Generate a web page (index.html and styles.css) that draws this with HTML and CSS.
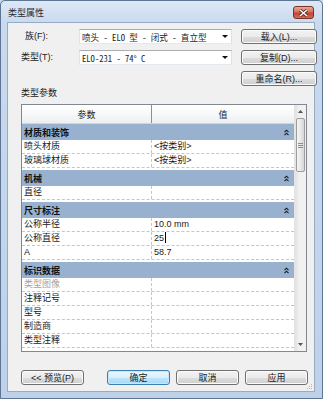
FILE: index.html
```html
<!DOCTYPE html>
<html lang="zh-CN">
<head>
    <meta charset="UTF-8">
    <meta name="viewport" content="width=device-width, initial-scale=1.0">
    <title>类型属性</title>
    <link rel="stylesheet" href="styles.css">
</head>
<body>
    <div class="dialog">
        <div class="title-bar">
            <span class="title">类型属性</span>
            <button class="close-btn" title="关闭">
                <svg width="9" height="8" viewBox="0 0 9 8"><path d="M1 1L8 7M8 1L1 7" stroke="#5a1f18" stroke-width="3"/><path d="M1 1L8 7M8 1L1 7" stroke="#fff" stroke-width="1.6"/></svg>
            </button>
        </div>

        <div class="dialog-body">
            <div class="type-form">
                <label class="field-label label-indent">族(F):</label>
                <div class="combo"><span>喷头 - ELO 型 - 闭式 - 直立型</span><i class="combo-arrow"></i></div>
                <button class="btn">载入(L)...</button>

                <label class="field-label">类型(T):</label>
                <div class="combo"><span>ELO-231 - 74° C</span><i class="combo-arrow"></i></div>
                <button class="btn">复制(D)...</button>

                <button class="btn btn-rename">重命名(R)...</button>
            </div>

            <div class="section-label">类型参数</div>

            <div class="param-table">
                <div class="grid">
                    <div class="grid-head">
                        <div class="head-cell">参数</div>
                        <div class="head-cell">值</div>
                    </div>
                    <div class="grid-body">
                        <div class="group-row"><span>材质和装饰</span><svg class="collapse" width="5" height="7" viewBox="0 0 5 7"><path d="M0.5 3.2L2.5 1.2L4.5 3.2M0.5 6.2L2.5 4.2L4.5 6.2" fill="none" stroke="#1a1a1a" stroke-width="1.1"/></svg></div>
                        <div class="row"><div class="cell">喷头材质</div><div class="cell">&lt;按类别&gt;</div></div>
                        <div class="row"><div class="cell">玻璃球材质</div><div class="cell">&lt;按类别&gt;</div></div>

                        <div class="group-row"><span>机械</span><svg class="collapse" width="5" height="7" viewBox="0 0 5 7"><path d="M0.5 3.2L2.5 1.2L4.5 3.2M0.5 6.2L2.5 4.2L4.5 6.2" fill="none" stroke="#1a1a1a" stroke-width="1.1"/></svg></div>
                        <div class="row"><div class="cell">直径</div><div class="cell"></div></div>

                        <div class="group-row"><span>尺寸标注</span><svg class="collapse" width="5" height="7" viewBox="0 0 5 7"><path d="M0.5 3.2L2.5 1.2L4.5 3.2M0.5 6.2L2.5 4.2L4.5 6.2" fill="none" stroke="#1a1a1a" stroke-width="1.1"/></svg></div>
                        <div class="row"><div class="cell">公称半径</div><div class="cell">10.0 mm</div></div>
                        <div class="row"><div class="cell">公称直径</div><div class="cell editing">25<span class="caret"></span></div></div>
                        <div class="row"><div class="cell">A</div><div class="cell">58.7</div></div>

                        <div class="group-row"><span>标识数据</span><svg class="collapse" width="5" height="7" viewBox="0 0 5 7"><path d="M0.5 3.2L2.5 1.2L4.5 3.2M0.5 6.2L2.5 4.2L4.5 6.2" fill="none" stroke="#1a1a1a" stroke-width="1.1"/></svg></div>
                        <div class="row"><div class="cell disabled">类型图像</div><div class="cell"></div></div>
                        <div class="row"><div class="cell">注释记号</div><div class="cell"></div></div>
                        <div class="row"><div class="cell">型号</div><div class="cell"></div></div>
                        <div class="row"><div class="cell">制造商</div><div class="cell"></div></div>
                        <div class="row"><div class="cell">类型注释</div><div class="cell"></div></div>
                    </div>
                </div>
                <div class="scrollbar">
                    <div class="scroll-arrow"><svg width="5" height="3" viewBox="0 0 5 3"><path d="M0 3L2.5 0L5 3Z" fill="#555"/></svg></div>
                    <div class="scroll-thumb"><svg width="5" height="5" viewBox="0 0 5 5"><path d="M0 0.5H5M0 2.5H5M0 4.5H5" stroke="#8c8c8c" stroke-width="1"/></svg></div>
                    <div class="scroll-track"></div>
                    <div class="scroll-arrow"><svg width="5" height="3" viewBox="0 0 5 3"><path d="M0 0L2.5 3L5 0Z" fill="#555"/></svg></div>
                </div>
            </div>

            <div class="footer">
                <button class="btn btn-wide">&lt;&lt; 预览(P)</button>
                <div class="footer-actions">
                    <button class="btn btn-wide btn-default">确定</button>
                    <button class="btn btn-wide">取消</button>
                    <button class="btn btn-wide">应用</button>
                </div>
            </div>

            <svg class="grip" width="6" height="6" viewBox="0 0 6 6">
                <rect x="4" y="0" width="1" height="1" fill="#b5b5b5"/>
                <rect x="2" y="2" width="1" height="1" fill="#b5b5b5"/>
                <rect x="4" y="2" width="1" height="1" fill="#b5b5b5"/>
                <rect x="0" y="4" width="1" height="1" fill="#b5b5b5"/>
                <rect x="2" y="4" width="1" height="1" fill="#b5b5b5"/>
                <rect x="4" y="4" width="1" height="1" fill="#b5b5b5"/>
            </svg>
        </div>
    </div>
</body>
</html>
```

FILE: styles.css
```css
* {
    box-sizing: border-box;
}
body {
    margin: 0;
    background-color: #c4d5ea;
    font-family: "Liberation Sans", "Noto Sans CJK SC", sans-serif;
    font-size: 9px;
    color: #1b1b1b;
}
.dialog {
    width: 323px;
    height: 399px;
    display: flex;
    flex-direction: column;
    border: 1px solid #5d7593;
    border-radius: 5px 5px 0 0;
    padding: 0 7px 6px 6px;
    background: linear-gradient(#dde8f5, #c9daee 22px, #bed1e9);
}
.title-bar {
    height: 21px;
    display: flex;
    justify-content: space-between;
    align-items: flex-start;
}
.title {
    padding: 6px 0 0 1px;
    line-height: 13px;
    color: #1e2b3a;
}
.close-btn {
    width: 21px;
    height: 13px;
    margin: 5px 1px 0 0;
    padding: 0;
    border: 1px solid #7b3128;
    border-radius: 3px;
    background: linear-gradient(#e9a99c, #d4705f 45%, #c1432f 55%, #d26b55);
    display: flex;
    align-items: center;
    justify-content: center;
}

.dialog-body {
    position: relative;
    flex-grow: 1;
    background-color: #f0f0f0;
    border: 1px solid #97abc4;
    padding: 6px 6px 6px 13px;
    display: flex;
    flex-direction: column;
}

/* family / type pickers */
.type-form {
    display: grid;
    grid-template-columns: 49px 153px 76px;
    grid-auto-rows: 15px;
    column-gap: 9px;
    row-gap: 6px;
    align-items: center;
}
.field-label {
    line-height: 15px;
    white-space: nowrap;
}
.label-indent {
    padding-left: 4px;
}
.combo {
    height: 15px;
    display: flex;
    align-items: center;
    justify-content: space-between;
    padding: 0 3px 0 2px;
    background-color: #fff;
    border: 1px solid #abadb3;
    border-color: #abadb3 #dbdfe6 #e3e9ef #e2e3ea;
    font-family: "Noto Sans Mono CJK SC", "Liberation Mono", "Noto Sans CJK SC", monospace;
    font-size: 8.6px;
    white-space: pre;
    overflow: hidden;
}
.combo-arrow {
    width: 0;
    height: 0;
    border-left: 3px solid transparent;
    border-right: 3px solid transparent;
    border-top: 3px solid #111;
}
.btn {
    height: 15px;
    padding: 0;
    font-family: inherit;
    font-size: 9px;
    color: #1b1b1b;
    border: 1px solid #707070;
    border-radius: 3px;
    background: linear-gradient(#f2f2f2, #ebebeb 50%, #dddddd 51%, #cfcfcf);
    box-shadow: inset 0 0 0 1px #fbfbfb;
}
.btn-rename {
    grid-column: 3;
}

.section-label {
    margin-top: 1px;
    line-height: 13px;
}

/* parameter table */
.param-table {
    width: 286px;
    height: 248px;
    margin-top: 4px;
    display: flex;
    border: 1px solid #828790;
    background-color: #fff;
}
.grid {
    width: 272px;
    overflow: hidden;
}
.grid-head {
    display: grid;
    grid-template-columns: 130px 142px;
    height: 19px;
    border-bottom: 1px solid #d5d5d5;
    background: linear-gradient(#ffffff, #f6f7f8 60%, #eceef0);
}
.head-cell {
    display: flex;
    align-items: center;
    justify-content: center;
}
.head-cell:first-child {
    border-right: 1px solid #8e8f8f;
}
.group-row {
    height: 16px;
    margin-top: 2px;
    display: flex;
    align-items: center;
    justify-content: space-between;
    padding: 0 5px 0 2px;
    background-color: #97b1cf;
    font-weight: bold;
    color: #111;
}
.group-row:first-child {
    margin-top: 0;
}
.row {
    display: grid;
    grid-template-columns: 130px 142px;
    height: 14px;
    border-bottom: 1px dashed #c6c6c6;
}
.cell {
    padding-left: 2px;
    line-height: 13px;
    white-space: nowrap;
}
.cell:first-child {
    border-right: 1px dashed #c6c6c6;
}
.cell.disabled {
    color: #a3a3a3;
}
.caret {
    display: inline-block;
    width: 1px;
    height: 11px;
    margin-left: 1px;
    vertical-align: -2px;
    background-color: #000;
}

.scrollbar {
    width: 12px;
    display: flex;
    flex-direction: column;
    background: linear-gradient(90deg, #e2e2e2, #f1f1f1 40%, #f1f1f1);
    border-left: 1px solid #e4e4e4;
}
.scroll-arrow {
    height: 13px;
    display: flex;
    align-items: center;
    justify-content: center;
}
.scroll-thumb {
    height: 54px;
    margin: 0 1px;
    border: 1px solid #9c9c9c;
    border-radius: 2px;
    background: linear-gradient(90deg, #f5f5f5, #e8e8e8 50%, #d6d6d6);
    display: flex;
    align-items: center;
    justify-content: center;
}
.scroll-track {
    flex-grow: 1;
}

/* dialog buttons */
.footer {
    margin-top: 18px;
    display: flex;
    justify-content: space-between;
}
.footer-actions {
    display: flex;
    gap: 6px;
}
.btn-wide {
    width: 63px;
}
.btn-default {
    border-color: #3c7fb1;
    background: linear-gradient(#eaf6fd, #d9f0fc 50%, #bee6fd 51%, #a7d9f5);
    box-shadow: inset 0 0 0 1px #c8e6f8;
}
.grip {
    position: absolute;
    right: 1px;
    bottom: 1px;
}
```
